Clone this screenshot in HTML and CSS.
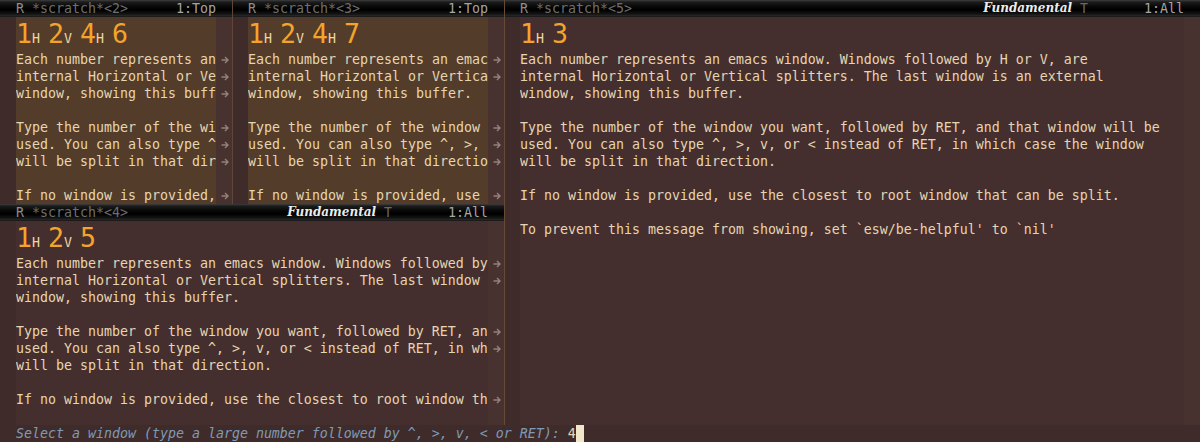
FILE: index.html
```html
<!DOCTYPE html>
<html>
<head>
<meta charset="utf-8">
<link rel="stylesheet" href="styles.css">
</head>
<body>
<div class="frame">
  <div class="main">
    <div class="left-col">
      <div class="top-row">
        <div class="win w1">
          <div class="modeline"><span class="ml-r">R</span>&nbsp;<span class="ml-buf">*scratch*&lt;2&gt;</span><span class="ml-right"><span class="ml-pos">1:Top</span></span></div>
          <div class="body">
            <div class="fringe fl"></div>
            <div class="text hl">
              <div class="big"><span class="d">1</span><span class="s">H </span><span class="d">2</span><span class="s">V </span><span class="d">4</span><span class="s">H </span><span class="d">6</span></div>
              <div class="ln">Each number represents an</div>
              <div class="ln">internal Horizontal or Ve</div>
              <div class="ln">window, showing this buff</div>
              <div class="ln"></div>
              <div class="ln">Type the number of the wi</div>
              <div class="ln">used. You can also type ^</div>
              <div class="ln">will be split in that dir</div>
              <div class="ln"></div>
              <div class="ln">If no window is provided,</div>
            </div>
            <div class="fringe fr">
              <div class="bigcell"></div>
              <div class="cell a"><svg viewBox="0 0 8 8"><path d="M0.5 4H7M4 1L7 4L4 7"/></svg></div>
              <div class="cell a"><svg viewBox="0 0 8 8"><path d="M0.5 4H7M4 1L7 4L4 7"/></svg></div>
              <div class="cell a"><svg viewBox="0 0 8 8"><path d="M0.5 4H7M4 1L7 4L4 7"/></svg></div>
              <div class="cell"></div>
              <div class="cell a"><svg viewBox="0 0 8 8"><path d="M0.5 4H7M4 1L7 4L4 7"/></svg></div>
              <div class="cell a"><svg viewBox="0 0 8 8"><path d="M0.5 4H7M4 1L7 4L4 7"/></svg></div>
              <div class="cell a"><svg viewBox="0 0 8 8"><path d="M0.5 4H7M4 1L7 4L4 7"/></svg></div>
              <div class="cell"></div>
              <div class="cell a"><svg viewBox="0 0 8 8"><path d="M0.5 4H7M4 1L7 4L4 7"/></svg></div>
            </div>
          </div>
        </div>
        <div class="win w2">
          <div class="modeline"><span class="ml-r">R</span>&nbsp;<span class="ml-buf">*scratch*&lt;3&gt;</span><span class="ml-right"><span class="ml-pos">1:Top</span></span></div>
          <div class="body">
            <div class="fringe fl"></div>
            <div class="text hl">
              <div class="big"><span class="d">1</span><span class="s">H </span><span class="d">2</span><span class="s">V </span><span class="d">4</span><span class="s">H </span><span class="d">7</span></div>
              <div class="ln">Each number represents an emac</div>
              <div class="ln">internal Horizontal or Vertica</div>
              <div class="ln">window, showing this buffer.</div>
              <div class="ln"></div>
              <div class="ln">Type the number of the window </div>
              <div class="ln">used. You can also type ^, &gt;, </div>
              <div class="ln">will be split in that directio</div>
              <div class="ln"></div>
              <div class="ln">If no window is provided, use </div>
            </div>
            <div class="fringe fr">
              <div class="bigcell"></div>
              <div class="cell a"><svg viewBox="0 0 8 8"><path d="M0.5 4H7M4 1L7 4L4 7"/></svg></div>
              <div class="cell a"><svg viewBox="0 0 8 8"><path d="M0.5 4H7M4 1L7 4L4 7"/></svg></div>
              <div class="cell"></div>
              <div class="cell"></div>
              <div class="cell a"><svg viewBox="0 0 8 8"><path d="M0.5 4H7M4 1L7 4L4 7"/></svg></div>
              <div class="cell a"><svg viewBox="0 0 8 8"><path d="M0.5 4H7M4 1L7 4L4 7"/></svg></div>
              <div class="cell a"><svg viewBox="0 0 8 8"><path d="M0.5 4H7M4 1L7 4L4 7"/></svg></div>
              <div class="cell"></div>
              <div class="cell a"><svg viewBox="0 0 8 8"><path d="M0.5 4H7M4 1L7 4L4 7"/></svg></div>
            </div>
          </div>
        </div>
      </div>
      <div class="win w4">
        <div class="modeline"><span class="ml-r">R</span>&nbsp;<span class="ml-buf">*scratch*&lt;4&gt;</span><span class="ml-right"><span class="ml-mode">Fundamental</span><span class="ml-t">&nbsp;T</span><span class="ml-gap"></span><span class="ml-pos">1:All</span></span></div>
        <div class="body">
          <div class="fringe fl"></div>
          <div class="text">
            <div class="big"><span class="d">1</span><span class="s">H </span><span class="d">2</span><span class="s">V </span><span class="d">5</span></div>
            <div class="ln">Each number represents an emacs window. Windows followed by</div>
            <div class="ln">internal Horizontal or Vertical splitters. The last window </div>
            <div class="ln">window, showing this buffer.</div>
            <div class="ln"></div>
            <div class="ln">Type the number of the window you want, followed by RET, an</div>
            <div class="ln">used. You can also type ^, &gt;, v, or &lt; instead of RET, in wh</div>
            <div class="ln">will be split in that direction.</div>
            <div class="ln"></div>
            <div class="ln">If no window is provided, use the closest to root window th</div>
          </div>
          <div class="fringe fr">
            <div class="bigcell"></div>
            <div class="cell a"><svg viewBox="0 0 8 8"><path d="M0.5 4H7M4 1L7 4L4 7"/></svg></div>
            <div class="cell a"><svg viewBox="0 0 8 8"><path d="M0.5 4H7M4 1L7 4L4 7"/></svg></div>
            <div class="cell"></div>
            <div class="cell"></div>
            <div class="cell a"><svg viewBox="0 0 8 8"><path d="M0.5 4H7M4 1L7 4L4 7"/></svg></div>
            <div class="cell a"><svg viewBox="0 0 8 8"><path d="M0.5 4H7M4 1L7 4L4 7"/></svg></div>
            <div class="cell"></div>
            <div class="cell"></div>
            <div class="cell a"><svg viewBox="0 0 8 8"><path d="M0.5 4H7M4 1L7 4L4 7"/></svg></div>
          </div>
        </div>
      </div>
    </div>
    <div class="win w5">
      <div class="modeline"><span class="ml-r">R</span>&nbsp;<span class="ml-buf">*scratch*&lt;5&gt;</span><span class="ml-right"><span class="ml-mode">Fundamental</span><span class="ml-t">&nbsp;T</span><span class="ml-gap"></span><span class="ml-pos">1:All</span></span></div>
      <div class="body">
        <div class="fringe fl"></div>
        <div class="text">
          <div class="big"><span class="d">1</span><span class="s">H </span><span class="d">3</span></div>
          <div class="ln">Each number represents an emacs window. Windows followed by H or V, are</div>
          <div class="ln">internal Horizontal or Vertical splitters. The last window is an external</div>
          <div class="ln">window, showing this buffer.</div>
          <div class="ln"></div>
          <div class="ln">Type the number of the window you want, followed by RET, and that window will be</div>
          <div class="ln">used. You can also type ^, &gt;, v, or &lt; instead of RET, in which case the window</div>
          <div class="ln">will be split in that direction.</div>
          <div class="ln"></div>
          <div class="ln">If no window is provided, use the closest to root window that can be split.</div>
          <div class="ln"></div>
          <div class="ln">To prevent this message from showing, set `esw/be-helpful' to `nil'</div>
        </div>
        <div class="fringe fr"></div>
      </div>
    </div>
  </div>
  <div class="minibuffer"><span class="prompt">Select a window (type a large number followed by ^, &gt;, v, &lt; or RET): </span><span class="input">4</span><span class="cursor"></span></div>
</div>
</body>
</html>
```

FILE: styles.css
```css
html, body {
  margin: 0;
  padding: 0;
  background: #452f2e;
}

.frame {
  width: 1200px;
  height: 442px;
  display: flex;
  flex-direction: column;
  font-family: "DejaVu Sans Mono", monospace;
  font-size: 13.29px;
  line-height: 17px;
  color: #e6d5b3;
  overflow: hidden;
}

.main {
  display: flex;
  height: 425px;
}

.left-col {
  width: 504px;
  display: flex;
  flex-direction: column;
  border-right: 1px solid #654a37;
}

.top-row {
  display: flex;
  height: 204px;
}

.win {
  display: flex;
  flex-direction: column;
  min-width: 0;
}

.w1 {
  width: 232px;
  border-right: 1px solid #5e4638;
}

.w2 {
  flex: 1;
}

.w4 {
  flex: 1;
}

.w5 {
  flex: 1;
}

.modeline {
  height: 17px;
  flex: none;
  display: flex;
  padding: 0 16px;
  white-space: pre;
  background: linear-gradient(#3e3e3e 0, #1c1c1c 2px, #060606 7px, #000 10px, #141414 14px, #2a2a2a 16px, #0c0c0c 17px);
  color: #8a8a8a;
}

.w2 .modeline,
.w5 .modeline {
  padding-left: 15px;
}

.ml-r {
  color: #8c8c8c;
}

.ml-buf {
  color: #6e6e6e;
}

.ml-right {
  margin-left: auto;
  display: flex;
}

.ml-mode {
  font-family: "DejaVu Serif", serif;
  font-weight: bold;
  font-style: italic;
  font-size: 12px;
  color: #ececec;
}

.ml-t {
  color: #676767;
}

.ml-gap {
  width: 56px;
}

.ml-pos {
  color: #a4a4a4;
}

.body {
  flex: 1;
  display: grid;
  grid-template-columns: 16px 1fr 16px;
  min-height: 0;
}

.w2 .body,
.w5 .body {
  grid-template-columns: 15px 1fr 16px;
}

.fringe {
  background: #48322f;
}

.fl {
  background: #3f2b2a;
}

.text {
  background: #452f2e;
  overflow: hidden;
}

.text.hl {
  background: #533d2a;
}

.big {
  height: 34px;
  line-height: 34px;
  white-space: pre;
}

.big .d {
  font-size: 26.58px;
  color: #f4a42a;
}

.big .s {
  line-height: 17px;
  color: #efd7a6;
}

.ln {
  height: 17px;
  white-space: pre;
}

.bigcell {
  height: 34px;
}

.cell {
  height: 17px;
  display: flex;
  align-items: center;
}

.cell svg {
  width: 8px;
  height: 8px;
  margin-left: 5px;
  fill: none;
  stroke: #94817a;
  stroke-width: 1.4;
}

.minibuffer {
  height: 17px;
  display: flex;
  padding-left: 16px;
  white-space: pre;
  background: #3f2b2a;
}

.prompt {
  font-style: italic;
  color: #7e9bb6;
}

.input {
  color: #e6d5b3;
}

.cursor {
  width: 8px;
  height: 17px;
  background: #f1e7c8;
}
```
